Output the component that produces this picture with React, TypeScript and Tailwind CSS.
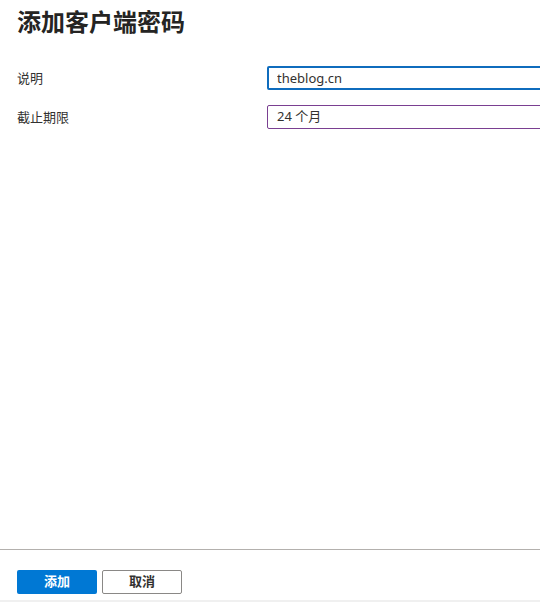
import React from 'react';

const FONT = "font-['Noto_Sans','Noto_Sans_CJK_SC',sans-serif]";

export default function App() {
  return (
    <div className={`h-[602px] w-[540px] overflow-hidden bg-white text-[#323130] flex flex-col ${FONT}`}>
      {/* 标题 */}
      <div className="flex-1 pl-[17px]">
        <h1 className="mt-[7px] text-[24px] font-bold leading-[30px] text-[#252423]">添加客户端密码</h1>

        {/* 表单 */}
        <div className="mt-[29px] flex flex-col gap-[15px]">
          <div className="flex items-center">
            <label className="w-[250px] shrink-0 text-[13px] leading-[24px]">说明</label>
            <input
              defaultValue="theblog.cn"
              className="h-[24px] w-[300px] shrink-0 rounded-[2px] border-2 border-[#0f6cbd] px-[8px] text-[13px] outline-none"
            />
          </div>
          <div className="flex items-center">
            <label className="w-[250px] shrink-0 text-[13px] leading-[24px]">截止期限</label>
            <div className="flex h-[24px] w-[300px] shrink-0 items-center rounded-[2px] border border-[#7a3f91] px-[9px] text-[13px]">
              24 个月
            </div>
          </div>
        </div>
      </div>

      {/* 底部按钮 */}
      <div className="border-t border-[#b3b0ad] pl-[17px] pt-[20px] pb-[6px]">
        <div className="flex gap-[5px]">
          <button className="h-[24px] w-[80px] rounded-[2px] bg-[#0078d4] text-[13px] font-semibold text-white">
            添加
          </button>
          <button className="h-[24px] w-[80px] rounded-[2px] border border-[#8a8886] bg-white text-[13px] font-semibold text-[#323130]">
            取消
          </button>
        </div>
      </div>
      <div className="h-[2px] bg-[#f0f0f0]" />
    </div>
  );
}
